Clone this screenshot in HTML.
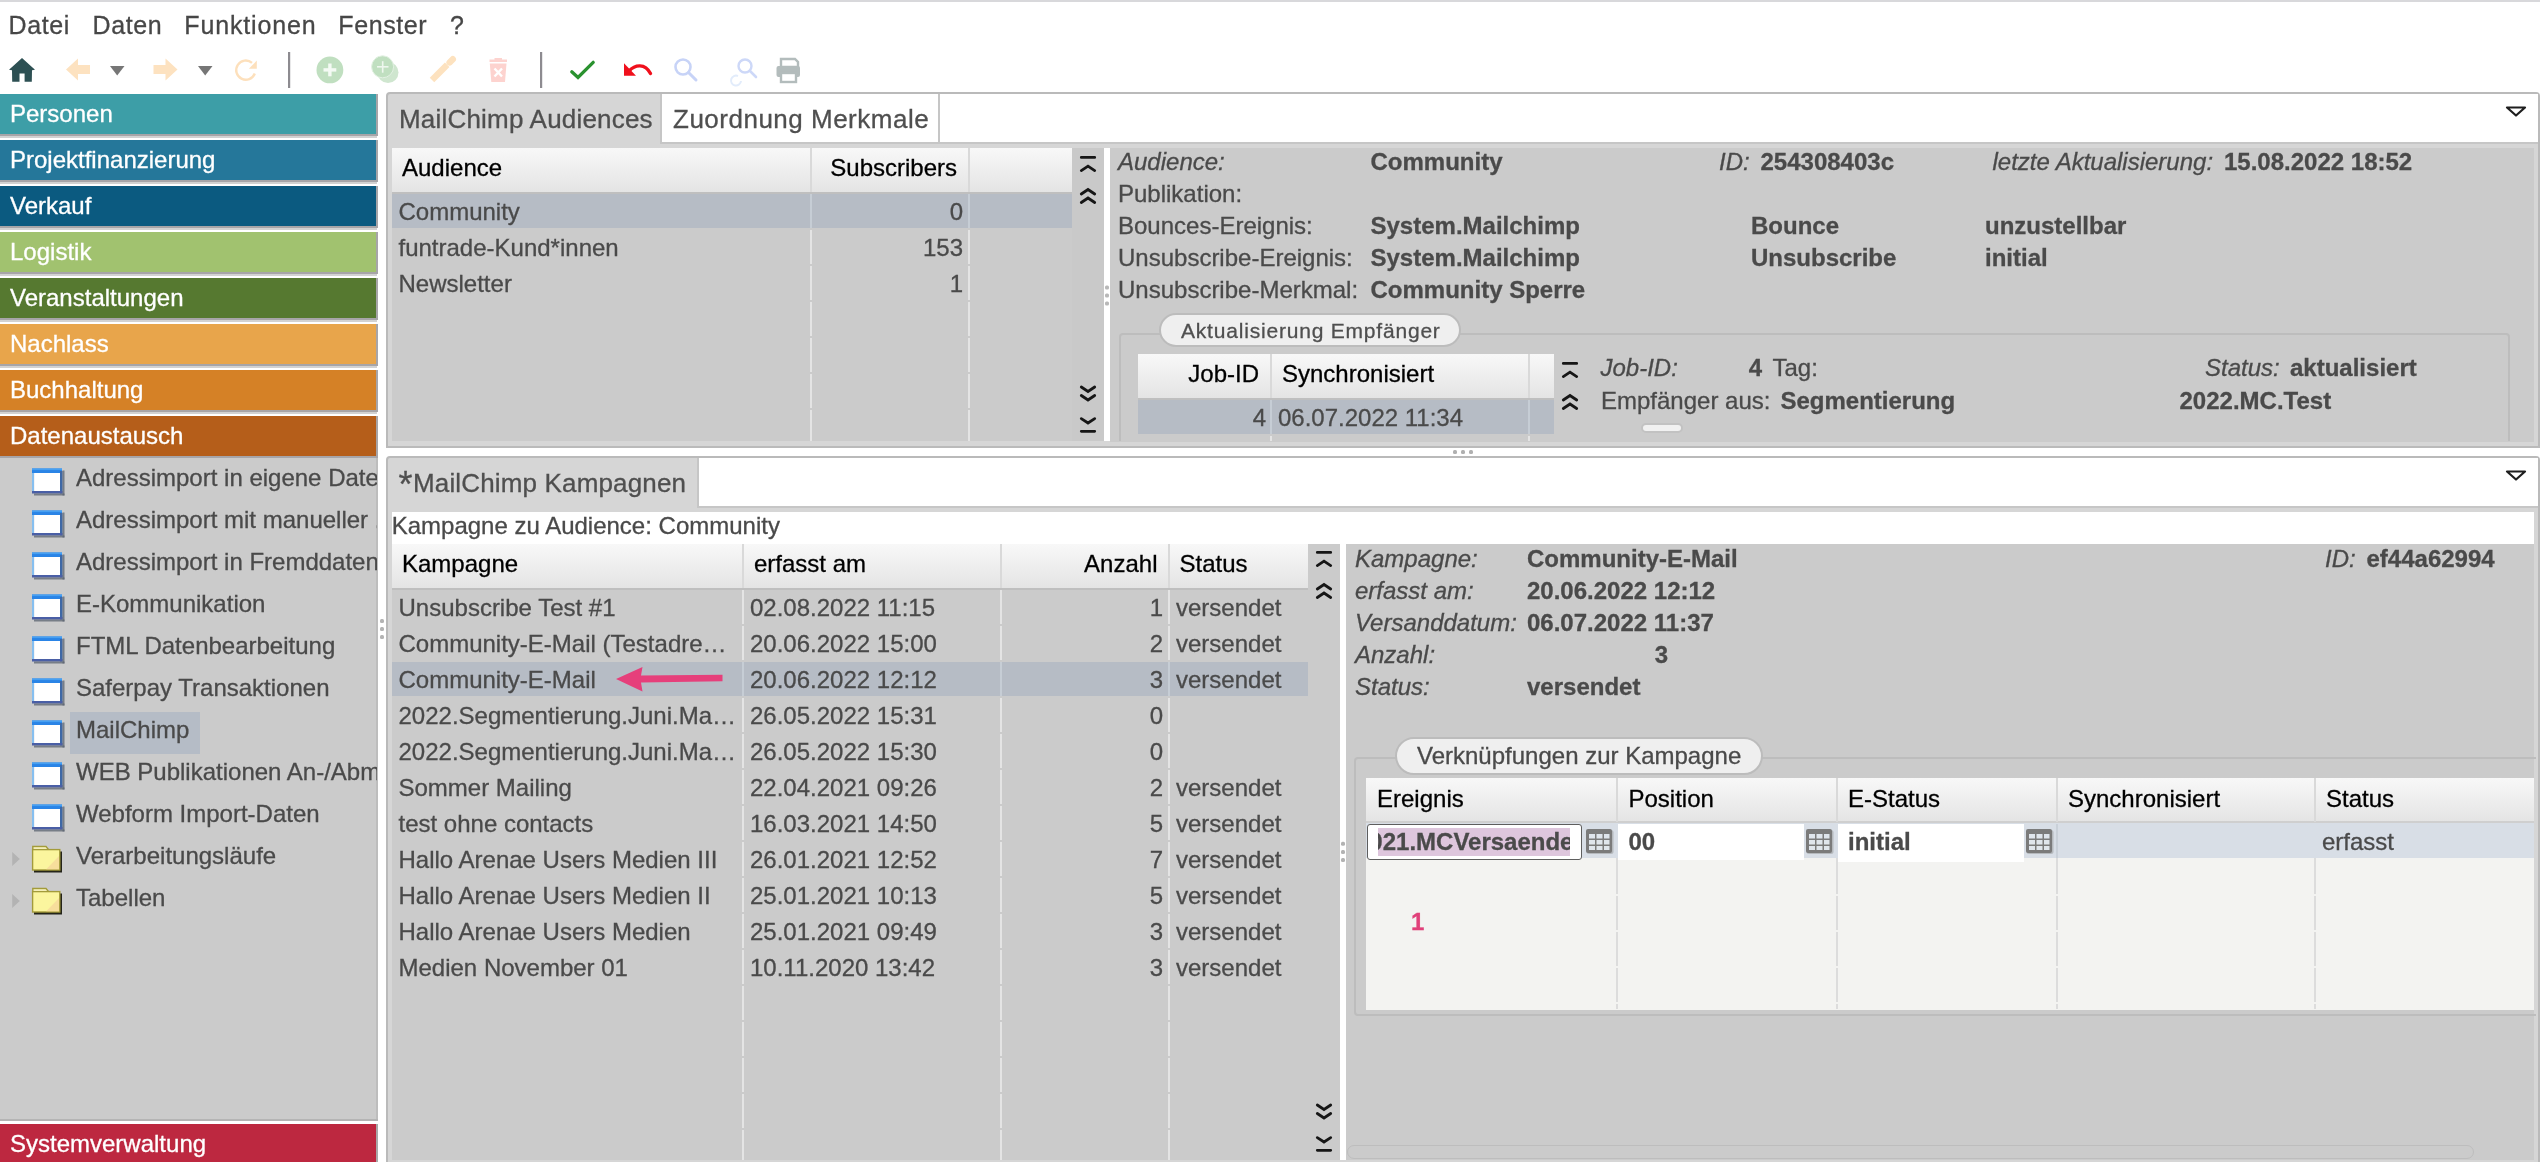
<!DOCTYPE html><html><head><meta charset="utf-8"><style>
html,body{margin:0;padding:0;}
body{will-change:transform;width:2540px;height:1162px;overflow:hidden;position:relative;background:#fff;font-family:'Liberation Sans', sans-serif;}
.t{position:absolute;white-space:nowrap;-webkit-text-stroke:0.3px currentColor;}
.r{position:absolute;}
svg{position:absolute;overflow:visible;}
</style></head><body>
<div class="r" style="left:0px;top:0px;width:2540px;height:2px;background:#d8d8db;"></div>
<div class="t" style="left:8.5px;top:13px;font-size:25px;line-height:25px;color:#474747;font-weight:normal;font-style:normal;letter-spacing:0.6px;">Datei</div>
<div class="t" style="left:92.6px;top:13px;font-size:25px;line-height:25px;color:#474747;font-weight:normal;font-style:normal;letter-spacing:0.6px;">Daten</div>
<div class="t" style="left:184.3px;top:13px;font-size:25px;line-height:25px;color:#474747;font-weight:normal;font-style:normal;letter-spacing:0.85px;">Funktionen</div>
<div class="t" style="left:338.3px;top:13px;font-size:25px;line-height:25px;color:#474747;font-weight:normal;font-style:normal;letter-spacing:0.6px;">Fenster</div>
<div class="t" style="left:450px;top:13px;font-size:25px;line-height:25px;color:#474747;font-weight:normal;font-style:normal;">?</div>
<svg style="left:0;top:0" width="820" height="92" viewBox="0 0 820 92">
<!-- home -->
<path d="M22 58 L35 69.8 L32 70.2 L31.8 81.8 L24.6 81.8 L24.6 73.5 L19.5 73.5 L19.5 81.8 L12.2 81.8 L12 70.2 L9 69.8 Z" fill="#2d5053"/>
<!-- back arrow -->
<path d="M66 69.5 L78 58.5 L78 65 L90 65 L90 74 L78 74 L78 80.5 Z" fill="#fde2c0"/>
<path d="M110 66 L124.5 66 L117.2 75.6 Z" fill="#767676"/>
<!-- forward -->
<path d="M177.5 69.5 L165.5 58.5 L165.5 65 L153.5 65 L153.5 74 L165.5 74 L165.5 80.5 Z" fill="#fde2c0"/>
<path d="M198 66 L212.5 66 L205.2 75.6 Z" fill="#767676"/>
<!-- refresh -->
<path d="M254.8 73.5 A9.6 9.6 0 1 1 252 62.8" fill="none" stroke="#fde0bc" stroke-width="2.4"/>
<path d="M248.8 68.8 L256.8 68.8 L256.8 60.6 Z" fill="#fde0bc"/>
<rect x="288" y="52" width="2.2" height="36" fill="#8d8b90"/>
<!-- plus circle -->
<circle cx="329.9" cy="69.9" r="13.4" fill="#c0dfc0"/>
<rect x="328.2" y="63.5" width="3.4" height="12.8" fill="#f4faf4"/>
<rect x="323.5" y="68.2" width="12.8" height="3.4" fill="#f4faf4"/>
<!-- plus circle 2 -->
<circle cx="388" cy="72.5" r="10.5" fill="#cfe6cf"/>
<circle cx="382.6" cy="66.8" r="11" fill="#c0dfc0" stroke="#e3f1e3" stroke-width="1"/>
<rect x="381.9" y="61.2" width="1.6" height="11.5" fill="#eef7ee"/>
<rect x="377" y="66" width="11.5" height="1.6" fill="#eef7ee"/>
<!-- pencil -->
<path d="M432 80 L447.2 64.8" stroke="#fde2bf" stroke-width="6.4"/>
<path d="M449.6 62.4 L452.8 59.2" stroke="#fde2bf" stroke-width="6.4" stroke-linecap="round"/>
<!-- trash -->
<path d="M489.5 59.5 L507 59.5 L507 62 L489.5 62 Z M494.5 58 L502 58 L502 59.5 L494.5 59.5 Z" fill="#fdd3cf"/>
<path d="M489.8 63.5 L506.5 63.5 L505 82 L491.3 82 Z" fill="#fdd3cf"/>
<path d="M494.5 68.5 L502 76.5 M502 68.5 L494.5 76.5" stroke="#fff" stroke-width="2.4"/>
<rect x="540" y="52" width="2.2" height="36" fill="#8d8b90"/>
<!-- check -->
<path d="M571.8 71.8 L578 77.5 L593.2 62.3" fill="none" stroke="#2a922f" stroke-width="3.3" stroke-linecap="round"/>
<!-- undo -->
<path d="M629 71 C635 64.5 645 63 650.5 73.5" fill="none" stroke="#f0101c" stroke-width="3.4" stroke-linecap="round"/>
<path d="M624 63.2 L624 75.8 L636 75.8 Z" fill="#f0101c"/>
<!-- search -->
<circle cx="683" cy="67" r="7.5" fill="none" stroke="#c7d3f7" stroke-width="2.6"/>
<path d="M688.5 72.5 L696 80" stroke="#c7d3f7" stroke-width="3" stroke-linecap="round"/>
<!-- search2 -->
<circle cx="745" cy="66" r="6.5" fill="none" stroke="#cdd8f8" stroke-width="2.4"/>
<path d="M750 71 L756 77" stroke="#cdd8f8" stroke-width="2.6" stroke-linecap="round"/>
<path d="M738 76 A5 5 0 1 0 741 81" fill="none" stroke="#e2ecfb" stroke-width="2"/>
<!-- printer -->
<path d="M781 59 L795 59 L798 62 L798 67 L781 67 Z" fill="none" stroke="#b3bcbc" stroke-width="2.4"/>
<rect x="776.5" y="66" width="23.5" height="11" rx="2" fill="#b3bcbc"/>
<rect x="781" y="73" width="15" height="9" fill="#fff" stroke="#b3bcbc" stroke-width="2.4"/>
</svg>
<div class="r" style="left:0px;top:94px;width:378px;height:42px;background:#a7a5a8;"></div>
<div class="r" style="left:0px;top:136px;width:377px;height:2px;background:#d2d2d2;"></div>
<div class="r" style="left:0px;top:94px;width:376px;height:40px;background:#3d9ea7;"></div>
<div class="t" style="left:10px;top:102px;font-size:24px;line-height:24px;color:#ffffff;font-weight:normal;font-style:normal;">Personen</div>
<div class="r" style="left:0px;top:140px;width:378px;height:42px;background:#a7a5a8;"></div>
<div class="r" style="left:0px;top:182px;width:377px;height:2px;background:#d2d2d2;"></div>
<div class="r" style="left:0px;top:140px;width:376px;height:40px;background:#25779a;"></div>
<div class="t" style="left:10px;top:148px;font-size:24px;line-height:24px;color:#ffffff;font-weight:normal;font-style:normal;">Projektfinanzierung</div>
<div class="r" style="left:0px;top:186px;width:378px;height:42px;background:#a7a5a8;"></div>
<div class="r" style="left:0px;top:228px;width:377px;height:2px;background:#d2d2d2;"></div>
<div class="r" style="left:0px;top:186px;width:376px;height:40px;background:#0b5a80;"></div>
<div class="t" style="left:10px;top:194px;font-size:24px;line-height:24px;color:#ffffff;font-weight:normal;font-style:normal;">Verkauf</div>
<div class="r" style="left:0px;top:232px;width:378px;height:42px;background:#a7a5a8;"></div>
<div class="r" style="left:0px;top:274px;width:377px;height:2px;background:#d2d2d2;"></div>
<div class="r" style="left:0px;top:232px;width:376px;height:40px;background:#a1c26f;"></div>
<div class="t" style="left:10px;top:240px;font-size:24px;line-height:24px;color:#ffffff;font-weight:normal;font-style:normal;">Logistik</div>
<div class="r" style="left:0px;top:278px;width:378px;height:42px;background:#a7a5a8;"></div>
<div class="r" style="left:0px;top:320px;width:377px;height:2px;background:#d2d2d2;"></div>
<div class="r" style="left:0px;top:278px;width:376px;height:40px;background:#567930;"></div>
<div class="t" style="left:10px;top:286px;font-size:24px;line-height:24px;color:#ffffff;font-weight:normal;font-style:normal;">Veranstaltungen</div>
<div class="r" style="left:0px;top:324px;width:378px;height:42px;background:#a7a5a8;"></div>
<div class="r" style="left:0px;top:366px;width:377px;height:2px;background:#d2d2d2;"></div>
<div class="r" style="left:0px;top:324px;width:376px;height:40px;background:#e8a54b;"></div>
<div class="t" style="left:10px;top:332px;font-size:24px;line-height:24px;color:#ffffff;font-weight:normal;font-style:normal;">Nachlass</div>
<div class="r" style="left:0px;top:370px;width:378px;height:42px;background:#a7a5a8;"></div>
<div class="r" style="left:0px;top:412px;width:377px;height:2px;background:#d2d2d2;"></div>
<div class="r" style="left:0px;top:370px;width:376px;height:40px;background:#d58126;"></div>
<div class="t" style="left:10px;top:378px;font-size:24px;line-height:24px;color:#ffffff;font-weight:normal;font-style:normal;">Buchhaltung</div>
<div class="r" style="left:0px;top:416px;width:378px;height:42px;background:#a7a5a8;"></div>
<div class="r" style="left:0px;top:458px;width:377px;height:2px;background:#d2d2d2;"></div>
<div class="r" style="left:0px;top:416px;width:376px;height:40px;background:#b55e1a;"></div>
<div class="t" style="left:10px;top:424px;font-size:24px;line-height:24px;color:#ffffff;font-weight:normal;font-style:normal;">Datenaustausch</div>
<div class="r" style="left:0px;top:458px;width:377px;height:661px;background:#cbcbcb;"></div>
<div class="r" style="left:376px;top:458px;width:2px;height:661px;background:#bdbdbd;"></div>
<div class="r" style="left:0px;top:1119px;width:378px;height:2px;background:#b4b4b4;"></div>
<div class="r" style="left:0px;top:1124px;width:378px;height:38px;background:#a9a9a9;"></div>
<div class="r" style="left:0px;top:1124px;width:376px;height:38px;background:#bd2840;"></div>
<div class="t" style="left:10px;top:1132px;font-size:24px;line-height:24px;color:#ffffff;font-weight:normal;font-style:normal;">Systemverwaltung</div>
<div class="r" style="left:0;top:458px;width:377px;height:660px;overflow:hidden">
<svg style="left:32px;top:10px" width="34" height="28"><rect x="0" y="0.5" width="30" height="4.6" fill="#2a84e6"/><rect x="0" y="0.5" width="30" height="1.6" fill="#46a0f2"/><rect x="0" y="5" width="2.2" height="20" fill="#86bff0"/><rect x="2.2" y="5" width="26" height="18" fill="#fff"/><rect x="28" y="3" width="2.5" height="22.5" fill="#3e68a6"/><rect x="0" y="23" width="30.5" height="2.5" fill="#4a5fa6"/><rect x="30.5" y="2.5" width="2" height="25" fill="#5b6470" opacity="0.75"/><rect x="2" y="25.5" width="30.5" height="2" fill="#5b6470" opacity="0.75"/></svg>
<div class="t" style="left:76px;top:8px;font-size:24px;line-height:24px;color:#4a4a4a">Adressimport in eigene Datenbank</div>
<svg style="left:32px;top:52px" width="34" height="28"><rect x="0" y="0.5" width="30" height="4.6" fill="#2a84e6"/><rect x="0" y="0.5" width="30" height="1.6" fill="#46a0f2"/><rect x="0" y="5" width="2.2" height="20" fill="#86bff0"/><rect x="2.2" y="5" width="26" height="18" fill="#fff"/><rect x="28" y="3" width="2.5" height="22.5" fill="#3e68a6"/><rect x="0" y="23" width="30.5" height="2.5" fill="#4a5fa6"/><rect x="30.5" y="2.5" width="2" height="25" fill="#5b6470" opacity="0.75"/><rect x="2" y="25.5" width="30.5" height="2" fill="#5b6470" opacity="0.75"/></svg>
<div class="t" style="left:76px;top:50px;font-size:24px;line-height:24px;color:#4a4a4a">Adressimport mit manueller .</div>
<svg style="left:32px;top:94px" width="34" height="28"><rect x="0" y="0.5" width="30" height="4.6" fill="#2a84e6"/><rect x="0" y="0.5" width="30" height="1.6" fill="#46a0f2"/><rect x="0" y="5" width="2.2" height="20" fill="#86bff0"/><rect x="2.2" y="5" width="26" height="18" fill="#fff"/><rect x="28" y="3" width="2.5" height="22.5" fill="#3e68a6"/><rect x="0" y="23" width="30.5" height="2.5" fill="#4a5fa6"/><rect x="30.5" y="2.5" width="2" height="25" fill="#5b6470" opacity="0.75"/><rect x="2" y="25.5" width="30.5" height="2" fill="#5b6470" opacity="0.75"/></svg>
<div class="t" style="left:76px;top:92px;font-size:24px;line-height:24px;color:#4a4a4a">Adressimport in Fremddaten</div>
<svg style="left:32px;top:136px" width="34" height="28"><rect x="0" y="0.5" width="30" height="4.6" fill="#2a84e6"/><rect x="0" y="0.5" width="30" height="1.6" fill="#46a0f2"/><rect x="0" y="5" width="2.2" height="20" fill="#86bff0"/><rect x="2.2" y="5" width="26" height="18" fill="#fff"/><rect x="28" y="3" width="2.5" height="22.5" fill="#3e68a6"/><rect x="0" y="23" width="30.5" height="2.5" fill="#4a5fa6"/><rect x="30.5" y="2.5" width="2" height="25" fill="#5b6470" opacity="0.75"/><rect x="2" y="25.5" width="30.5" height="2" fill="#5b6470" opacity="0.75"/></svg>
<div class="t" style="left:76px;top:134px;font-size:24px;line-height:24px;color:#4a4a4a">E-Kommunikation</div>
<svg style="left:32px;top:178px" width="34" height="28"><rect x="0" y="0.5" width="30" height="4.6" fill="#2a84e6"/><rect x="0" y="0.5" width="30" height="1.6" fill="#46a0f2"/><rect x="0" y="5" width="2.2" height="20" fill="#86bff0"/><rect x="2.2" y="5" width="26" height="18" fill="#fff"/><rect x="28" y="3" width="2.5" height="22.5" fill="#3e68a6"/><rect x="0" y="23" width="30.5" height="2.5" fill="#4a5fa6"/><rect x="30.5" y="2.5" width="2" height="25" fill="#5b6470" opacity="0.75"/><rect x="2" y="25.5" width="30.5" height="2" fill="#5b6470" opacity="0.75"/></svg>
<div class="t" style="left:76px;top:176px;font-size:24px;line-height:24px;color:#4a4a4a">FTML Datenbearbeitung</div>
<svg style="left:32px;top:220px" width="34" height="28"><rect x="0" y="0.5" width="30" height="4.6" fill="#2a84e6"/><rect x="0" y="0.5" width="30" height="1.6" fill="#46a0f2"/><rect x="0" y="5" width="2.2" height="20" fill="#86bff0"/><rect x="2.2" y="5" width="26" height="18" fill="#fff"/><rect x="28" y="3" width="2.5" height="22.5" fill="#3e68a6"/><rect x="0" y="23" width="30.5" height="2.5" fill="#4a5fa6"/><rect x="30.5" y="2.5" width="2" height="25" fill="#5b6470" opacity="0.75"/><rect x="2" y="25.5" width="30.5" height="2" fill="#5b6470" opacity="0.75"/></svg>
<div class="t" style="left:76px;top:218px;font-size:24px;line-height:24px;color:#4a4a4a">Saferpay Transaktionen</div>
<div class="r" style="left:70px;top:254px;width:130px;height:42px;background:#b5bcc6"></div>
<svg style="left:32px;top:262px" width="34" height="28"><rect x="0" y="0.5" width="30" height="4.6" fill="#2a84e6"/><rect x="0" y="0.5" width="30" height="1.6" fill="#46a0f2"/><rect x="0" y="5" width="2.2" height="20" fill="#86bff0"/><rect x="2.2" y="5" width="26" height="18" fill="#fff"/><rect x="28" y="3" width="2.5" height="22.5" fill="#3e68a6"/><rect x="0" y="23" width="30.5" height="2.5" fill="#4a5fa6"/><rect x="30.5" y="2.5" width="2" height="25" fill="#5b6470" opacity="0.75"/><rect x="2" y="25.5" width="30.5" height="2" fill="#5b6470" opacity="0.75"/></svg>
<div class="t" style="left:76px;top:260px;font-size:24px;line-height:24px;color:#4a4a4a">MailChimp</div>
<svg style="left:32px;top:304px" width="34" height="28"><rect x="0" y="0.5" width="30" height="4.6" fill="#2a84e6"/><rect x="0" y="0.5" width="30" height="1.6" fill="#46a0f2"/><rect x="0" y="5" width="2.2" height="20" fill="#86bff0"/><rect x="2.2" y="5" width="26" height="18" fill="#fff"/><rect x="28" y="3" width="2.5" height="22.5" fill="#3e68a6"/><rect x="0" y="23" width="30.5" height="2.5" fill="#4a5fa6"/><rect x="30.5" y="2.5" width="2" height="25" fill="#5b6470" opacity="0.75"/><rect x="2" y="25.5" width="30.5" height="2" fill="#5b6470" opacity="0.75"/></svg>
<div class="t" style="left:76px;top:302px;font-size:24px;line-height:24px;color:#4a4a4a">WEB Publikationen An-/Abmeldung</div>
<svg style="left:32px;top:346px" width="34" height="28"><rect x="0" y="0.5" width="30" height="4.6" fill="#2a84e6"/><rect x="0" y="0.5" width="30" height="1.6" fill="#46a0f2"/><rect x="0" y="5" width="2.2" height="20" fill="#86bff0"/><rect x="2.2" y="5" width="26" height="18" fill="#fff"/><rect x="28" y="3" width="2.5" height="22.5" fill="#3e68a6"/><rect x="0" y="23" width="30.5" height="2.5" fill="#4a5fa6"/><rect x="30.5" y="2.5" width="2" height="25" fill="#5b6470" opacity="0.75"/><rect x="2" y="25.5" width="30.5" height="2" fill="#5b6470" opacity="0.75"/></svg>
<div class="t" style="left:76px;top:344px;font-size:24px;line-height:24px;color:#4a4a4a">Webform Import-Daten</div>
<svg style="left:10px;top:387px" width="60" height="30"><path d="M2.2 7 L9.8 14 L2.2 21 Z" fill="#b3b3b3"/><rect x="24" y="6.5" width="28" height="21" fill="#24241a"/><path d="M22.8 4.6 L22.8 1.5 L36 1.5 L38.5 4.6 Z" fill="#fdf8c8" stroke="#a39b3a" stroke-width="1.4"/><rect x="22.6" y="4.6" width="27.2" height="20.4" fill="#fbf59e" stroke="#a39b3a" stroke-width="1.4"/><path d="M36 24.5 L49 24.5 L49 11 Z" fill="#f5cf9a" opacity="0.6"/></svg>
<div class="t" style="left:76px;top:386px;font-size:24px;line-height:24px;color:#4a4a4a">Verarbeitungsläufe</div>
<svg style="left:10px;top:429px" width="60" height="30"><path d="M2.2 7 L9.8 14 L2.2 21 Z" fill="#b3b3b3"/><rect x="24" y="6.5" width="28" height="21" fill="#24241a"/><path d="M22.8 4.6 L22.8 1.5 L36 1.5 L38.5 4.6 Z" fill="#fdf8c8" stroke="#a39b3a" stroke-width="1.4"/><rect x="22.6" y="4.6" width="27.2" height="20.4" fill="#fbf59e" stroke="#a39b3a" stroke-width="1.4"/><path d="M36 24.5 L49 24.5 L49 11 Z" fill="#f5cf9a" opacity="0.6"/></svg>
<div class="t" style="left:76px;top:428px;font-size:24px;line-height:24px;color:#4a4a4a">Tabellen</div>
</div>
<svg style="left:0;top:0" width="400" height="700"><g fill="#b3b3b3"><rect x="380" y="619" width="4" height="4" rx="1.5"/><rect x="380" y="627" width="4" height="4" rx="1.5"/><rect x="380" y="635" width="4" height="4" rx="1.5"/></g></svg>
<div class="r" style="left:386px;top:92px;width:2150px;height:352px;border:2px solid #bababa;border-radius:4px 4px 0 0;background:#d6d6d6"></div>
<div class="r" style="left:660px;top:94px;width:1878px;height:48px;background:#ffffff;"></div>
<div class="r" style="left:660px;top:142px;width:1878px;height:2px;background:#c6c6c6;"></div>
<div class="r" style="left:660px;top:94px;width:2px;height:49px;background:#c6c6c6;"></div>
<div class="r" style="left:938px;top:94px;width:2px;height:49px;background:#c6c6c6;"></div>
<div class="t" style="left:399px;top:106px;font-size:26px;line-height:26px;color:#4f4f4f;font-weight:normal;font-style:normal;letter-spacing:0.2px;">MailChimp Audiences</div>
<div class="t" style="left:673px;top:106px;font-size:26px;line-height:26px;color:#4f4f4f;font-weight:normal;font-style:normal;letter-spacing:0.5px;">Zuordnung Merkmale</div>
<svg style="left:2503px;top:103px" width="26" height="16"><path d="M4 4.5 L22 4.5 L13 12.5 Z" fill="#fff" stroke="#1e1e1e" stroke-width="2.2" stroke-linejoin="round"/></svg>
<div class="r" style="left:392px;top:148px;width:680px;height:293px;background:#cbcbcb;"></div>
<div class="r" style="left:392px;top:148px;width:680px;height:44px;background:linear-gradient(#f8f8f8,#ececec 60%,#e4e4e4);"></div>
<div class="r" style="left:810px;top:148px;width:2px;height:44px;background:#d9d9d9;"></div>
<div class="r" style="left:968px;top:148px;width:2px;height:44px;background:#d9d9d9;"></div>
<div class="r" style="left:392px;top:192px;width:680px;height:2px;background:#bfbfbf;"></div>
<div class="r" style="left:392px;top:194px;width:680px;height:34px;background:#b6bcc5;"></div>
<div class="r" style="left:810px;top:194px;width:2px;height:34px;background:#c6cdd5;"></div>
<div class="r" style="left:810px;top:230px;width:2px;height:34px;background:#e4e4e4;"></div>
<div class="r" style="left:810px;top:266px;width:2px;height:34px;background:#e4e4e4;"></div>
<div class="r" style="left:810px;top:302px;width:2px;height:34px;background:#e4e4e4;"></div>
<div class="r" style="left:810px;top:338px;width:2px;height:34px;background:#e4e4e4;"></div>
<div class="r" style="left:810px;top:374px;width:2px;height:34px;background:#e4e4e4;"></div>
<div class="r" style="left:810px;top:410px;width:2px;height:31px;background:#e4e4e4;"></div>
<div class="r" style="left:968px;top:194px;width:2px;height:34px;background:#c6cdd5;"></div>
<div class="r" style="left:968px;top:230px;width:2px;height:34px;background:#e4e4e4;"></div>
<div class="r" style="left:968px;top:266px;width:2px;height:34px;background:#e4e4e4;"></div>
<div class="r" style="left:968px;top:302px;width:2px;height:34px;background:#e4e4e4;"></div>
<div class="r" style="left:968px;top:338px;width:2px;height:34px;background:#e4e4e4;"></div>
<div class="r" style="left:968px;top:374px;width:2px;height:34px;background:#e4e4e4;"></div>
<div class="r" style="left:968px;top:410px;width:2px;height:31px;background:#e4e4e4;"></div>
<div class="t" style="left:402px;top:156px;font-size:24px;line-height:24px;color:#000;font-weight:normal;font-style:normal;">Audience</div>
<div class="t" style="right:1583px;text-align:right;top:156px;font-size:24px;line-height:24px;color:#000;font-weight:normal;font-style:normal;">Subscribers</div>
<div class="t" style="left:398.5px;top:200px;font-size:24px;line-height:24px;color:#4a4a4a;font-weight:normal;font-style:normal;">Community</div>
<div class="t" style="right:1577px;text-align:right;top:200px;font-size:24px;line-height:24px;color:#4a4a4a;font-weight:normal;font-style:normal;">0</div>
<div class="t" style="left:398.5px;top:236px;font-size:24px;line-height:24px;color:#4a4a4a;font-weight:normal;font-style:normal;">funtrade-Kund*innen</div>
<div class="t" style="right:1577px;text-align:right;top:236px;font-size:24px;line-height:24px;color:#4a4a4a;font-weight:normal;font-style:normal;">153</div>
<div class="t" style="left:398.5px;top:272px;font-size:24px;line-height:24px;color:#4a4a4a;font-weight:normal;font-style:normal;">Newsletter</div>
<div class="t" style="right:1577px;text-align:right;top:272px;font-size:24px;line-height:24px;color:#4a4a4a;font-weight:normal;font-style:normal;">1</div>
<div class="r" style="left:1072px;top:148px;width:32px;height:293px;background:#c9c9c9;"></div>
<svg style="left:1079px;top:156px" width="18" height="20"><path d="M2.3 1.4 H15.7 M2.3 14.6 L9 10.2 L15.7 14.6" fill="none" stroke="#161616" stroke-width="2.8" stroke-linecap="round"/></svg>
<svg style="left:1079px;top:186px" width="18" height="20"><path d="M2.3 8 L9 3.5 L15.7 8 M2.3 16.5 L9 12 L15.7 16.5" fill="none" stroke="#161616" stroke-width="2.8" stroke-linecap="round"/></svg>
<svg style="left:1079px;top:384px" width="18" height="20"><path d="M2.3 3 L9 7.5 L15.7 3 M2.3 11.5 L9 16 L15.7 11.5" fill="none" stroke="#161616" stroke-width="2.8" stroke-linecap="round"/></svg>
<svg style="left:1079px;top:416.3px" width="18" height="20"><path d="M2.3 2.6 L9 7 L15.7 2.6 M2.3 15.3 H15.7" fill="none" stroke="#161616" stroke-width="2.8" stroke-linecap="round"/></svg>
<div class="r" style="left:1104px;top:148px;width:6px;height:293px;background:#ffffff;"></div>
<svg style="left:1100px;top:280px" width="14" height="30"><g fill="#b8b8b8"><rect x="5" y="5.5" width="4" height="4" rx="1.5"/><rect x="5" y="13.5" width="4" height="4" rx="1.5"/><rect x="5" y="21.5" width="4" height="4" rx="1.5"/></g></svg>
<div class="r" style="left:1110px;top:148px;width:1424px;height:294px;background:#cbcbcb;"></div>
<div class="t" style="left:1118px;top:150px;font-size:24px;line-height:24px;color:#4a4a4a;font-weight:normal;font-style:italic;">Audience:</div>
<div class="t" style="left:1370.5px;top:150px;font-size:24px;line-height:24px;color:#4a4a4a;font-weight:bold;font-style:normal;">Community</div>
<div class="t" style="left:1118px;top:182px;font-size:24px;line-height:24px;color:#4a4a4a;font-weight:normal;font-style:normal;">Publikation:</div>
<div class="t" style="left:1118px;top:214px;font-size:24px;line-height:24px;color:#4a4a4a;font-weight:normal;font-style:normal;">Bounces-Ereignis:</div>
<div class="t" style="left:1370.5px;top:214px;font-size:24px;line-height:24px;color:#4a4a4a;font-weight:bold;font-style:normal;">System.Mailchimp</div>
<div class="t" style="left:1118px;top:246px;font-size:24px;line-height:24px;color:#4a4a4a;font-weight:normal;font-style:normal;">Unsubscribe-Ereignis:</div>
<div class="t" style="left:1370.5px;top:246px;font-size:24px;line-height:24px;color:#4a4a4a;font-weight:bold;font-style:normal;">System.Mailchimp</div>
<div class="t" style="left:1118px;top:278px;font-size:24px;line-height:24px;color:#4a4a4a;font-weight:normal;font-style:normal;">Unsubscribe-Merkmal:</div>
<div class="t" style="left:1370.5px;top:278px;font-size:24px;line-height:24px;color:#4a4a4a;font-weight:bold;font-style:normal;">Community Sperre</div>
<div class="t" style="left:1719px;top:150px;font-size:24px;line-height:24px;color:#4a4a4a;font-weight:normal;font-style:italic;">ID:</div>
<div class="t" style="left:1760.5px;top:150px;font-size:24px;line-height:24px;color:#4a4a4a;font-weight:bold;font-style:normal;">254308403c</div>
<div class="t" style="left:1992.5px;top:150px;font-size:24px;line-height:24px;color:#4a4a4a;font-weight:normal;font-style:italic;">letzte Aktualisierung:</div>
<div class="t" style="left:2224px;top:150px;font-size:24px;line-height:24px;color:#4a4a4a;font-weight:bold;font-style:normal;">15.08.2022 18:52</div>
<div class="t" style="left:1751px;top:214px;font-size:24px;line-height:24px;color:#4a4a4a;font-weight:bold;font-style:normal;">Bounce</div>
<div class="t" style="left:1985px;top:214px;font-size:24px;line-height:24px;color:#4a4a4a;font-weight:bold;font-style:normal;">unzustellbar</div>
<div class="t" style="left:1751px;top:246px;font-size:24px;line-height:24px;color:#4a4a4a;font-weight:bold;font-style:normal;">Unsubscribe</div>
<div class="t" style="left:1985px;top:246px;font-size:24px;line-height:24px;color:#4a4a4a;font-weight:bold;font-style:normal;">initial</div>
<div class="r" style="left:1110px;top:148px;width:1426px;height:293px;overflow:hidden">
<div class="r" style="left:9px;top:185px;width:1387px;height:200px;border:2px solid #bdbdbd;border-radius:4px"></div>
</div>
<div class="r" style="left:1158.5px;top:312.5px;width:298px;height:30px;border:2px solid #bcbcbc;border-radius:17px;background:#efefef"></div>
<div class="t" style="left:1181px;top:320px;font-size:21px;line-height:21px;color:#4f4f4f;font-weight:normal;font-style:normal;letter-spacing:0.8px;">Aktualisierung Empfänger</div>
<div class="r" style="left:1138px;top:354px;width:416px;height:87px;background:#cbcbcb;"></div>
<div class="r" style="left:1138px;top:354px;width:416px;height:44px;background:linear-gradient(#f8f8f8,#ececec 60%,#e4e4e4);"></div>
<div class="r" style="left:1270px;top:354px;width:2px;height:44px;background:#d9d9d9;"></div>
<div class="r" style="left:1528px;top:354px;width:2px;height:44px;background:#d9d9d9;"></div>
<div class="r" style="left:1138px;top:398px;width:416px;height:2px;background:#bfbfbf;"></div>
<div class="r" style="left:1138px;top:400px;width:416px;height:34px;background:#b6bcc5;"></div>
<div class="r" style="left:1270px;top:400px;width:2px;height:34px;background:#c6cdd5;"></div>
<div class="r" style="left:1528px;top:400px;width:2px;height:34px;background:#c6cdd5;"></div>
<div class="r" style="left:1270px;top:436px;width:2px;height:5px;background:#e4e4e4;"></div>
<div class="r" style="left:1528px;top:436px;width:2px;height:5px;background:#e4e4e4;"></div>
<div class="t" style="right:1281px;text-align:right;top:362px;font-size:24px;line-height:24px;color:#000;font-weight:normal;font-style:normal;">Job-ID</div>
<div class="t" style="left:1282px;top:362px;font-size:24px;line-height:24px;color:#000;font-weight:normal;font-style:normal;">Synchronisiert</div>
<div class="t" style="right:1274px;text-align:right;top:406px;font-size:24px;line-height:24px;color:#4a4a4a;font-weight:normal;font-style:normal;">4</div>
<div class="t" style="left:1278px;top:406px;font-size:24px;line-height:24px;color:#4a4a4a;font-weight:normal;font-style:normal;">06.07.2022 11:34</div>
<svg style="left:1560.6px;top:361.6px" width="18" height="20"><path d="M2.3 1.4 H15.7 M2.3 14.6 L9 10.2 L15.7 14.6" fill="none" stroke="#161616" stroke-width="2.8" stroke-linecap="round"/></svg>
<svg style="left:1560.6px;top:391.5px" width="18" height="20"><path d="M2.3 8 L9 3.5 L15.7 8 M2.3 16.5 L9 12 L15.7 16.5" fill="none" stroke="#161616" stroke-width="2.8" stroke-linecap="round"/></svg>
<div class="t" style="left:1600.5px;top:355.5px;font-size:24px;line-height:24px;color:#4a4a4a;font-weight:normal;font-style:italic;">Job-ID:</div>
<div class="t" style="right:778px;text-align:right;top:355.5px;font-size:24px;line-height:24px;color:#4a4a4a;font-weight:bold;font-style:normal;">4</div>
<div class="t" style="left:1772.5px;top:355.5px;font-size:24px;line-height:24px;color:#4a4a4a;font-weight:normal;font-style:normal;">Tag:</div>
<div class="t" style="left:2205px;top:355.5px;font-size:24px;line-height:24px;color:#4a4a4a;font-weight:normal;font-style:italic;">Status:</div>
<div class="t" style="left:2290px;top:355.5px;font-size:24px;line-height:24px;color:#4a4a4a;font-weight:bold;font-style:normal;">aktualisiert</div>
<div class="t" style="left:1601px;top:388.5px;font-size:24px;line-height:24px;color:#4a4a4a;font-weight:normal;font-style:normal;">Empfänger aus:</div>
<div class="t" style="left:1780.5px;top:388.5px;font-size:24px;line-height:24px;color:#4a4a4a;font-weight:bold;font-style:normal;">Segmentierung</div>
<div class="t" style="left:2179.5px;top:388.5px;font-size:24px;line-height:24px;color:#4a4a4a;font-weight:bold;font-style:normal;">2022.MC.Test</div>
<div class="r" style="left:1641px;top:423px;width:38px;height:6px;border:2px solid #c2c2c2;border-radius:5px;background:#f1f1f1"></div>
<svg style="left:1450px;top:446px" width="26" height="12"><g fill="#b0b0b0"><rect x="3" y="4" width="4" height="4" rx="1.5"/><rect x="11" y="4" width="4" height="4" rx="1.5"/><rect x="19" y="4" width="4" height="4" rx="1.5"/></g></svg>
<div class="r" style="left:386px;top:456px;width:2150px;height:710px;border:2px solid #bababa;border-radius:4px;background:#d6d6d6"></div>
<div class="r" style="left:697px;top:458px;width:1841px;height:48px;background:#ffffff;"></div>
<div class="r" style="left:697px;top:506px;width:1841px;height:2px;background:#c6c6c6;"></div>
<div class="r" style="left:697px;top:458px;width:2px;height:48px;background:#c6c6c6;"></div>
<div class="t" style="left:398.5px;top:466.5px;font-size:36px;line-height:36px;color:#4f4f4f;font-weight:normal;font-style:normal;">*</div>
<div class="t" style="left:413px;top:470px;font-size:26px;line-height:26px;color:#4f4f4f;font-weight:normal;font-style:normal;letter-spacing:0.15px;">MailChimp Kampagnen</div>
<svg style="left:2503px;top:467px" width="26" height="16"><path d="M4 4.5 L22 4.5 L13 12.5 Z" fill="#fff" stroke="#1e1e1e" stroke-width="2.2" stroke-linejoin="round"/></svg>
<div class="r" style="left:392px;top:512px;width:2142px;height:32px;background:#ffffff;"></div>
<div class="t" style="left:391.7px;top:513.5px;font-size:24px;line-height:24px;color:#4a4a4a;font-weight:normal;font-style:normal;">Kampagne zu Audience: Community</div>
<div class="r" style="left:392px;top:544px;width:916px;height:616px;background:#cbcbcb;"></div>
<div class="r" style="left:392px;top:544px;width:916px;height:44px;background:linear-gradient(#f8f8f8,#ececec 60%,#e4e4e4);"></div>
<div class="r" style="left:392px;top:588px;width:916px;height:2px;background:#bfbfbf;"></div>
<div class="r" style="left:392px;top:662px;width:916px;height:34px;background:#b6bcc5;"></div>
<div class="r" style="left:742px;top:544px;width:2px;height:44px;background:#d9d9d9;"></div>
<div class="r" style="left:742px;top:590px;width:2px;height:34px;background:#e4e4e4;"></div>
<div class="r" style="left:742px;top:626px;width:2px;height:34px;background:#e4e4e4;"></div>
<div class="r" style="left:742px;top:662px;width:2px;height:34px;background:#c6cdd5;"></div>
<div class="r" style="left:742px;top:698px;width:2px;height:34px;background:#e4e4e4;"></div>
<div class="r" style="left:742px;top:734px;width:2px;height:34px;background:#e4e4e4;"></div>
<div class="r" style="left:742px;top:770px;width:2px;height:34px;background:#e4e4e4;"></div>
<div class="r" style="left:742px;top:806px;width:2px;height:34px;background:#e4e4e4;"></div>
<div class="r" style="left:742px;top:842px;width:2px;height:34px;background:#e4e4e4;"></div>
<div class="r" style="left:742px;top:878px;width:2px;height:34px;background:#e4e4e4;"></div>
<div class="r" style="left:742px;top:914px;width:2px;height:34px;background:#e4e4e4;"></div>
<div class="r" style="left:742px;top:950px;width:2px;height:34px;background:#e4e4e4;"></div>
<div class="r" style="left:742px;top:986px;width:2px;height:34px;background:#e4e4e4;"></div>
<div class="r" style="left:742px;top:1022px;width:2px;height:34px;background:#e4e4e4;"></div>
<div class="r" style="left:742px;top:1058px;width:2px;height:34px;background:#e4e4e4;"></div>
<div class="r" style="left:742px;top:1094px;width:2px;height:34px;background:#e4e4e4;"></div>
<div class="r" style="left:742px;top:1130px;width:2px;height:30px;background:#e4e4e4;"></div>
<div class="r" style="left:1000px;top:544px;width:2px;height:44px;background:#d9d9d9;"></div>
<div class="r" style="left:1000px;top:590px;width:2px;height:34px;background:#e4e4e4;"></div>
<div class="r" style="left:1000px;top:626px;width:2px;height:34px;background:#e4e4e4;"></div>
<div class="r" style="left:1000px;top:662px;width:2px;height:34px;background:#c6cdd5;"></div>
<div class="r" style="left:1000px;top:698px;width:2px;height:34px;background:#e4e4e4;"></div>
<div class="r" style="left:1000px;top:734px;width:2px;height:34px;background:#e4e4e4;"></div>
<div class="r" style="left:1000px;top:770px;width:2px;height:34px;background:#e4e4e4;"></div>
<div class="r" style="left:1000px;top:806px;width:2px;height:34px;background:#e4e4e4;"></div>
<div class="r" style="left:1000px;top:842px;width:2px;height:34px;background:#e4e4e4;"></div>
<div class="r" style="left:1000px;top:878px;width:2px;height:34px;background:#e4e4e4;"></div>
<div class="r" style="left:1000px;top:914px;width:2px;height:34px;background:#e4e4e4;"></div>
<div class="r" style="left:1000px;top:950px;width:2px;height:34px;background:#e4e4e4;"></div>
<div class="r" style="left:1000px;top:986px;width:2px;height:34px;background:#e4e4e4;"></div>
<div class="r" style="left:1000px;top:1022px;width:2px;height:34px;background:#e4e4e4;"></div>
<div class="r" style="left:1000px;top:1058px;width:2px;height:34px;background:#e4e4e4;"></div>
<div class="r" style="left:1000px;top:1094px;width:2px;height:34px;background:#e4e4e4;"></div>
<div class="r" style="left:1000px;top:1130px;width:2px;height:30px;background:#e4e4e4;"></div>
<div class="r" style="left:1168px;top:544px;width:2px;height:44px;background:#d9d9d9;"></div>
<div class="r" style="left:1168px;top:590px;width:2px;height:34px;background:#e4e4e4;"></div>
<div class="r" style="left:1168px;top:626px;width:2px;height:34px;background:#e4e4e4;"></div>
<div class="r" style="left:1168px;top:662px;width:2px;height:34px;background:#c6cdd5;"></div>
<div class="r" style="left:1168px;top:698px;width:2px;height:34px;background:#e4e4e4;"></div>
<div class="r" style="left:1168px;top:734px;width:2px;height:34px;background:#e4e4e4;"></div>
<div class="r" style="left:1168px;top:770px;width:2px;height:34px;background:#e4e4e4;"></div>
<div class="r" style="left:1168px;top:806px;width:2px;height:34px;background:#e4e4e4;"></div>
<div class="r" style="left:1168px;top:842px;width:2px;height:34px;background:#e4e4e4;"></div>
<div class="r" style="left:1168px;top:878px;width:2px;height:34px;background:#e4e4e4;"></div>
<div class="r" style="left:1168px;top:914px;width:2px;height:34px;background:#e4e4e4;"></div>
<div class="r" style="left:1168px;top:950px;width:2px;height:34px;background:#e4e4e4;"></div>
<div class="r" style="left:1168px;top:986px;width:2px;height:34px;background:#e4e4e4;"></div>
<div class="r" style="left:1168px;top:1022px;width:2px;height:34px;background:#e4e4e4;"></div>
<div class="r" style="left:1168px;top:1058px;width:2px;height:34px;background:#e4e4e4;"></div>
<div class="r" style="left:1168px;top:1094px;width:2px;height:34px;background:#e4e4e4;"></div>
<div class="r" style="left:1168px;top:1130px;width:2px;height:30px;background:#e4e4e4;"></div>
<div class="t" style="left:402px;top:552px;font-size:24px;line-height:24px;color:#000;font-weight:normal;font-style:normal;">Kampagne</div>
<div class="t" style="left:754px;top:552px;font-size:24px;line-height:24px;color:#000;font-weight:normal;font-style:normal;">erfasst am</div>
<div class="t" style="right:1382.5px;text-align:right;top:552px;font-size:24px;line-height:24px;color:#000;font-weight:normal;font-style:normal;">Anzahl</div>
<div class="t" style="left:1179.5px;top:552px;font-size:24px;line-height:24px;color:#000;font-weight:normal;font-style:normal;">Status</div>
<div class="t" style="left:398.5px;top:596px;font-size:24px;line-height:24px;color:#4a4a4a;font-weight:normal;font-style:normal;">Unsubscribe Test #1</div>
<div class="t" style="left:750px;top:596px;font-size:24px;line-height:24px;color:#4a4a4a;font-weight:normal;font-style:normal;">02.08.2022 11:15</div>
<div class="t" style="right:1377px;text-align:right;top:596px;font-size:24px;line-height:24px;color:#4a4a4a;font-weight:normal;font-style:normal;">1</div>
<div class="t" style="left:1176px;top:596px;font-size:24px;line-height:24px;color:#4a4a4a;font-weight:normal;font-style:normal;">versendet</div>
<div class="t" style="left:398.5px;top:632px;font-size:24px;line-height:24px;color:#4a4a4a;font-weight:normal;font-style:normal;">Community-E-Mail (Testadre…</div>
<div class="t" style="left:750px;top:632px;font-size:24px;line-height:24px;color:#4a4a4a;font-weight:normal;font-style:normal;">20.06.2022 15:00</div>
<div class="t" style="right:1377px;text-align:right;top:632px;font-size:24px;line-height:24px;color:#4a4a4a;font-weight:normal;font-style:normal;">2</div>
<div class="t" style="left:1176px;top:632px;font-size:24px;line-height:24px;color:#4a4a4a;font-weight:normal;font-style:normal;">versendet</div>
<div class="t" style="left:398.5px;top:668px;font-size:24px;line-height:24px;color:#4a4a4a;font-weight:normal;font-style:normal;">Community-E-Mail</div>
<div class="t" style="left:750px;top:668px;font-size:24px;line-height:24px;color:#4a4a4a;font-weight:normal;font-style:normal;">20.06.2022 12:12</div>
<div class="t" style="right:1377px;text-align:right;top:668px;font-size:24px;line-height:24px;color:#4a4a4a;font-weight:normal;font-style:normal;">3</div>
<div class="t" style="left:1176px;top:668px;font-size:24px;line-height:24px;color:#4a4a4a;font-weight:normal;font-style:normal;">versendet</div>
<div class="t" style="left:398.5px;top:704px;font-size:24px;line-height:24px;color:#4a4a4a;font-weight:normal;font-style:normal;">2022.Segmentierung.Juni.Ma…</div>
<div class="t" style="left:750px;top:704px;font-size:24px;line-height:24px;color:#4a4a4a;font-weight:normal;font-style:normal;">26.05.2022 15:31</div>
<div class="t" style="right:1377px;text-align:right;top:704px;font-size:24px;line-height:24px;color:#4a4a4a;font-weight:normal;font-style:normal;">0</div>
<div class="t" style="left:398.5px;top:740px;font-size:24px;line-height:24px;color:#4a4a4a;font-weight:normal;font-style:normal;">2022.Segmentierung.Juni.Ma…</div>
<div class="t" style="left:750px;top:740px;font-size:24px;line-height:24px;color:#4a4a4a;font-weight:normal;font-style:normal;">26.05.2022 15:30</div>
<div class="t" style="right:1377px;text-align:right;top:740px;font-size:24px;line-height:24px;color:#4a4a4a;font-weight:normal;font-style:normal;">0</div>
<div class="t" style="left:398.5px;top:776px;font-size:24px;line-height:24px;color:#4a4a4a;font-weight:normal;font-style:normal;">Sommer Mailing</div>
<div class="t" style="left:750px;top:776px;font-size:24px;line-height:24px;color:#4a4a4a;font-weight:normal;font-style:normal;">22.04.2021 09:26</div>
<div class="t" style="right:1377px;text-align:right;top:776px;font-size:24px;line-height:24px;color:#4a4a4a;font-weight:normal;font-style:normal;">2</div>
<div class="t" style="left:1176px;top:776px;font-size:24px;line-height:24px;color:#4a4a4a;font-weight:normal;font-style:normal;">versendet</div>
<div class="t" style="left:398.5px;top:812px;font-size:24px;line-height:24px;color:#4a4a4a;font-weight:normal;font-style:normal;">test ohne contacts</div>
<div class="t" style="left:750px;top:812px;font-size:24px;line-height:24px;color:#4a4a4a;font-weight:normal;font-style:normal;">16.03.2021 14:50</div>
<div class="t" style="right:1377px;text-align:right;top:812px;font-size:24px;line-height:24px;color:#4a4a4a;font-weight:normal;font-style:normal;">5</div>
<div class="t" style="left:1176px;top:812px;font-size:24px;line-height:24px;color:#4a4a4a;font-weight:normal;font-style:normal;">versendet</div>
<div class="t" style="left:398.5px;top:848px;font-size:24px;line-height:24px;color:#4a4a4a;font-weight:normal;font-style:normal;">Hallo Arenae Users Medien III</div>
<div class="t" style="left:750px;top:848px;font-size:24px;line-height:24px;color:#4a4a4a;font-weight:normal;font-style:normal;">26.01.2021 12:52</div>
<div class="t" style="right:1377px;text-align:right;top:848px;font-size:24px;line-height:24px;color:#4a4a4a;font-weight:normal;font-style:normal;">7</div>
<div class="t" style="left:1176px;top:848px;font-size:24px;line-height:24px;color:#4a4a4a;font-weight:normal;font-style:normal;">versendet</div>
<div class="t" style="left:398.5px;top:884px;font-size:24px;line-height:24px;color:#4a4a4a;font-weight:normal;font-style:normal;">Hallo Arenae Users Medien II</div>
<div class="t" style="left:750px;top:884px;font-size:24px;line-height:24px;color:#4a4a4a;font-weight:normal;font-style:normal;">25.01.2021 10:13</div>
<div class="t" style="right:1377px;text-align:right;top:884px;font-size:24px;line-height:24px;color:#4a4a4a;font-weight:normal;font-style:normal;">5</div>
<div class="t" style="left:1176px;top:884px;font-size:24px;line-height:24px;color:#4a4a4a;font-weight:normal;font-style:normal;">versendet</div>
<div class="t" style="left:398.5px;top:920px;font-size:24px;line-height:24px;color:#4a4a4a;font-weight:normal;font-style:normal;">Hallo Arenae Users Medien</div>
<div class="t" style="left:750px;top:920px;font-size:24px;line-height:24px;color:#4a4a4a;font-weight:normal;font-style:normal;">25.01.2021 09:49</div>
<div class="t" style="right:1377px;text-align:right;top:920px;font-size:24px;line-height:24px;color:#4a4a4a;font-weight:normal;font-style:normal;">3</div>
<div class="t" style="left:1176px;top:920px;font-size:24px;line-height:24px;color:#4a4a4a;font-weight:normal;font-style:normal;">versendet</div>
<div class="t" style="left:398.5px;top:956px;font-size:24px;line-height:24px;color:#4a4a4a;font-weight:normal;font-style:normal;">Medien November 01</div>
<div class="t" style="left:750px;top:956px;font-size:24px;line-height:24px;color:#4a4a4a;font-weight:normal;font-style:normal;">10.11.2020 13:42</div>
<div class="t" style="right:1377px;text-align:right;top:956px;font-size:24px;line-height:24px;color:#4a4a4a;font-weight:normal;font-style:normal;">3</div>
<div class="t" style="left:1176px;top:956px;font-size:24px;line-height:24px;color:#4a4a4a;font-weight:normal;font-style:normal;">versendet</div>
<svg style="left:0;top:0" width="760" height="720"><path d="M616 679 L642.5 667 L641 675.5 L722.5 674.8 L722.5 681.3 L641 682.5 L642.5 691.5 Z" fill="#e63f7b"/></svg>
<div class="r" style="left:1308px;top:544px;width:32px;height:616px;background:#cbcbcb;"></div>
<svg style="left:1315px;top:551px" width="18" height="20"><path d="M2.3 1.4 H15.7 M2.3 14.6 L9 10.2 L15.7 14.6" fill="none" stroke="#161616" stroke-width="2.8" stroke-linecap="round"/></svg>
<svg style="left:1315px;top:581.2px" width="18" height="20"><path d="M2.3 8 L9 3.5 L15.7 8 M2.3 16.5 L9 12 L15.7 16.5" fill="none" stroke="#161616" stroke-width="2.8" stroke-linecap="round"/></svg>
<svg style="left:1315px;top:1102.2px" width="18" height="20"><path d="M2.3 3 L9 7.5 L15.7 3 M2.3 11.5 L9 16 L15.7 11.5" fill="none" stroke="#161616" stroke-width="2.8" stroke-linecap="round"/></svg>
<svg style="left:1315px;top:1134.8px" width="18" height="20"><path d="M2.3 2.6 L9 7 L15.7 2.6 M2.3 15.3 H15.7" fill="none" stroke="#161616" stroke-width="2.8" stroke-linecap="round"/></svg>
<div class="r" style="left:1340px;top:544px;width:6px;height:616px;background:#ffffff;"></div>
<svg style="left:1336px;top:836px" width="14" height="30"><g fill="#b3b3b3"><rect x="5" y="5.7" width="4" height="4" rx="1.5"/><rect x="5" y="13.9" width="4" height="4" rx="1.5"/><rect x="5" y="21.9" width="4" height="4" rx="1.5"/></g></svg>
<div class="r" style="left:1346px;top:544px;width:1188px;height:616px;background:#cbcbcb;"></div>
<div class="t" style="left:1355px;top:546.5px;font-size:24px;line-height:24px;color:#4a4a4a;font-weight:normal;font-style:italic;">Kampagne:</div>
<div class="t" style="left:1527px;top:546.5px;font-size:24px;line-height:24px;color:#4a4a4a;font-weight:bold;font-style:normal;">Community-E-Mail</div>
<div class="t" style="left:1355px;top:578.5px;font-size:24px;line-height:24px;color:#4a4a4a;font-weight:normal;font-style:italic;">erfasst am:</div>
<div class="t" style="left:1527px;top:578.5px;font-size:24px;line-height:24px;color:#4a4a4a;font-weight:bold;font-style:normal;">20.06.2022 12:12</div>
<div class="t" style="left:1355px;top:610.5px;font-size:24px;line-height:24px;color:#4a4a4a;font-weight:normal;font-style:italic;">Versanddatum:</div>
<div class="t" style="left:1527px;top:610.5px;font-size:24px;line-height:24px;color:#4a4a4a;font-weight:bold;font-style:normal;">06.07.2022 11:37</div>
<div class="t" style="left:1355px;top:642.5px;font-size:24px;line-height:24px;color:#4a4a4a;font-weight:normal;font-style:italic;">Anzahl:</div>
<div class="t" style="right:872px;text-align:right;top:642.5px;font-size:24px;line-height:24px;color:#4a4a4a;font-weight:bold;font-style:normal;">3</div>
<div class="t" style="left:1355px;top:674.5px;font-size:24px;line-height:24px;color:#4a4a4a;font-weight:normal;font-style:italic;">Status:</div>
<div class="t" style="left:1527px;top:674.5px;font-size:24px;line-height:24px;color:#4a4a4a;font-weight:bold;font-style:normal;">versendet</div>
<div class="t" style="left:2325px;top:546.5px;font-size:24px;line-height:24px;color:#4a4a4a;font-weight:normal;font-style:italic;">ID:</div>
<div class="t" style="left:2366.5px;top:546.5px;font-size:24px;line-height:24px;color:#4a4a4a;font-weight:bold;font-style:normal;">ef44a62994</div>
<div class="r" style="left:1346px;top:544px;width:1190px;height:616px;overflow:hidden">
<div class="r" style="left:8px;top:213px;width:1251px;height:255px;border:2px solid #bdbdbd;border-radius:4px"></div>
</div>
<div class="r" style="left:1394.5px;top:736.5px;width:364.5px;height:34.5px;border:2px solid #bcbcbc;border-radius:19px;background:#efefef"></div>
<div class="t" style="left:1417px;top:743.5px;font-size:24px;line-height:24px;color:#4a4a4a;font-weight:normal;font-style:normal;">Verknüpfungen zur Kampagne</div>
<div class="r" style="left:1366px;top:778px;width:1168px;height:232px;background:#f3f3f1;"></div>
<div class="r" style="left:1366px;top:778px;width:1168px;height:44px;background:linear-gradient(#f8f8f8,#ececec 60%,#e4e4e4);"></div>
<div class="r" style="left:1366px;top:821px;width:1168px;height:2px;background:#cfcfcf;"></div>
<div class="r" style="left:1616px;top:778px;width:2px;height:44px;background:#d9d9d9;"></div>
<div class="r" style="left:1616px;top:858px;width:2px;height:36px;background:#dcdcdc;"></div>
<div class="r" style="left:1616px;top:896px;width:2px;height:34px;background:#dcdcdc;"></div>
<div class="r" style="left:1616px;top:932px;width:2px;height:34px;background:#dcdcdc;"></div>
<div class="r" style="left:1616px;top:968px;width:2px;height:34px;background:#dcdcdc;"></div>
<div class="r" style="left:1616px;top:1004px;width:2px;height:5px;background:#dcdcdc;"></div>
<div class="r" style="left:1836px;top:778px;width:2px;height:44px;background:#d9d9d9;"></div>
<div class="r" style="left:1836px;top:858px;width:2px;height:36px;background:#dcdcdc;"></div>
<div class="r" style="left:1836px;top:896px;width:2px;height:34px;background:#dcdcdc;"></div>
<div class="r" style="left:1836px;top:932px;width:2px;height:34px;background:#dcdcdc;"></div>
<div class="r" style="left:1836px;top:968px;width:2px;height:34px;background:#dcdcdc;"></div>
<div class="r" style="left:1836px;top:1004px;width:2px;height:5px;background:#dcdcdc;"></div>
<div class="r" style="left:2056px;top:778px;width:2px;height:44px;background:#d9d9d9;"></div>
<div class="r" style="left:2056px;top:858px;width:2px;height:36px;background:#dcdcdc;"></div>
<div class="r" style="left:2056px;top:896px;width:2px;height:34px;background:#dcdcdc;"></div>
<div class="r" style="left:2056px;top:932px;width:2px;height:34px;background:#dcdcdc;"></div>
<div class="r" style="left:2056px;top:968px;width:2px;height:34px;background:#dcdcdc;"></div>
<div class="r" style="left:2056px;top:1004px;width:2px;height:5px;background:#dcdcdc;"></div>
<div class="r" style="left:2314px;top:778px;width:2px;height:44px;background:#d9d9d9;"></div>
<div class="r" style="left:2314px;top:858px;width:2px;height:36px;background:#dcdcdc;"></div>
<div class="r" style="left:2314px;top:896px;width:2px;height:34px;background:#dcdcdc;"></div>
<div class="r" style="left:2314px;top:932px;width:2px;height:34px;background:#dcdcdc;"></div>
<div class="r" style="left:2314px;top:968px;width:2px;height:34px;background:#dcdcdc;"></div>
<div class="r" style="left:2314px;top:1004px;width:2px;height:5px;background:#dcdcdc;"></div>
<div class="r" style="left:1366px;top:823px;width:1168px;height:35px;background:#d8dee6;"></div>
<div class="t" style="left:1377px;top:786.5px;font-size:24px;line-height:24px;color:#000;font-weight:normal;font-style:normal;">Ereignis</div>
<div class="t" style="left:1628.5px;top:786.5px;font-size:24px;line-height:24px;color:#000;font-weight:normal;font-style:normal;">Position</div>
<div class="t" style="left:1848px;top:786.5px;font-size:24px;line-height:24px;color:#000;font-weight:normal;font-style:normal;">E-Status</div>
<div class="t" style="left:2068px;top:786.5px;font-size:24px;line-height:24px;color:#000;font-weight:normal;font-style:normal;">Synchronisiert</div>
<div class="t" style="left:2326px;top:786.5px;font-size:24px;line-height:24px;color:#000;font-weight:normal;font-style:normal;">Status</div>
<div class="r" style="left:1618px;top:824px;width:186px;height:36px;background:#ffffff;"></div>
<div class="r" style="left:1838px;top:824px;width:186px;height:38px;background:#ffffff;"></div>
<div class="r" style="left:2056px;top:824px;width:2px;height:34px;background:#c9d0d8;"></div>
<svg style="left:1585px;top:828px" width="30" height="28"><rect x="1.5" y="2" width="27" height="24" rx="2.5" fill="#8c8c8c" opacity="0.45"/><rect x="1" y="1" width="26" height="24" rx="2" fill="#7b7b7b"/><g fill="#dfe5ec"><rect x="4" y="6" width="6" height="4.5"/><rect x="11.5" y="6" width="6" height="4.5"/><rect x="19" y="6" width="5.5" height="4.5"/><rect x="4" y="12" width="6" height="4.5"/><rect x="11.5" y="12" width="6" height="4.5"/><rect x="19" y="12" width="5.5" height="4.5"/><rect x="4" y="18" width="6" height="4"/><rect x="11.5" y="18" width="6" height="4"/><rect x="19" y="18" width="5.5" height="4"/></g></svg>
<svg style="left:1805px;top:828px" width="30" height="28"><rect x="1.5" y="2" width="27" height="24" rx="2.5" fill="#8c8c8c" opacity="0.45"/><rect x="1" y="1" width="26" height="24" rx="2" fill="#7b7b7b"/><g fill="#dfe5ec"><rect x="4" y="6" width="6" height="4.5"/><rect x="11.5" y="6" width="6" height="4.5"/><rect x="19" y="6" width="5.5" height="4.5"/><rect x="4" y="12" width="6" height="4.5"/><rect x="11.5" y="12" width="6" height="4.5"/><rect x="19" y="12" width="5.5" height="4.5"/><rect x="4" y="18" width="6" height="4"/><rect x="11.5" y="18" width="6" height="4"/><rect x="19" y="18" width="5.5" height="4"/></g></svg>
<svg style="left:2025px;top:828px" width="30" height="28"><rect x="1.5" y="2" width="27" height="24" rx="2.5" fill="#8c8c8c" opacity="0.45"/><rect x="1" y="1" width="26" height="24" rx="2" fill="#7b7b7b"/><g fill="#dfe5ec"><rect x="4" y="6" width="6" height="4.5"/><rect x="11.5" y="6" width="6" height="4.5"/><rect x="19" y="6" width="5.5" height="4.5"/><rect x="4" y="12" width="6" height="4.5"/><rect x="11.5" y="12" width="6" height="4.5"/><rect x="19" y="12" width="5.5" height="4.5"/><rect x="4" y="18" width="6" height="4"/><rect x="11.5" y="18" width="6" height="4"/><rect x="19" y="18" width="5.5" height="4"/></g></svg>
<div class="r" style="left:1366.5px;top:823.5px;width:213px;height:34px;border:1.8px solid #5e5e5e;border-radius:3px;background:#fff"></div>
<div class="r" style="left:1378px;top:828px;width:192px;height:28px;background:#dec6dd;overflow:hidden">
<div class="t" style="left:-22px;top:1.6px;font-size:24px;line-height:24px;font-weight:bold;color:#4a4a4a">2021.MCVersaende</div>
</div>
<div class="t" style="left:1628.5px;top:830px;font-size:24px;line-height:24px;color:#4a4a4a;font-weight:bold;font-style:normal;">00</div>
<div class="t" style="left:1848px;top:830px;font-size:24px;line-height:24px;color:#4a4a4a;font-weight:bold;font-style:normal;">initial</div>
<div class="t" style="left:2322px;top:830px;font-size:24px;line-height:24px;color:#4a4a4a;font-weight:normal;font-style:normal;">erfasst</div>
<div class="t" style="left:1411px;top:910px;font-size:24px;line-height:24px;color:#e0407a;font-weight:bold;font-style:normal;">1</div>
<div class="r" style="left:1347px;top:1144.5px;width:1125px;height:12px;border:1.6px solid #bdbdbd;border-radius:8px"></div>
</body></html>
